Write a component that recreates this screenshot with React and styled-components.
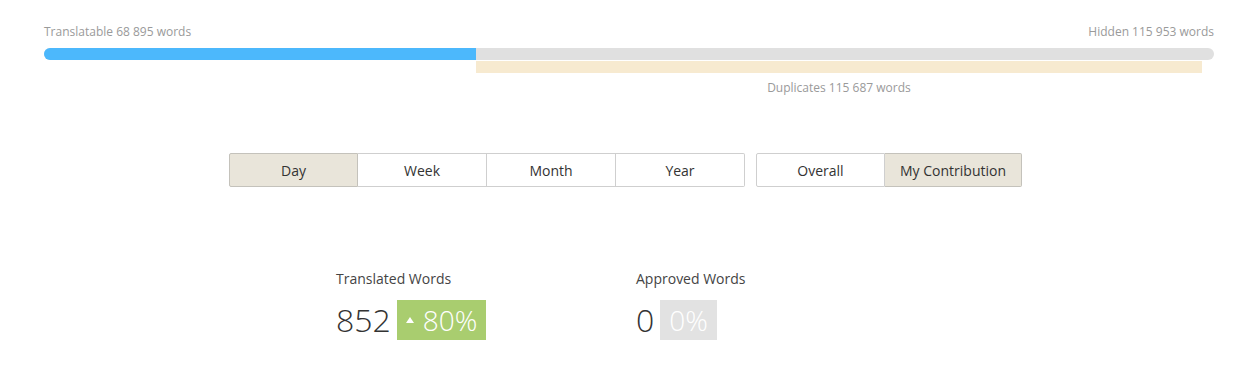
import React from 'react'
import styled, { createGlobalStyle } from 'styled-components'

const GlobalStyle = createGlobalStyle`
    body {
        margin: 0;
        background: #fff;
        font-family: "Open Sans", "Noto Sans", sans-serif;
        color: #333;
    }
`

const Page = styled.div`
    padding: 24px 22px 0 44px;
`

const Labels = styled.div`
    display: flex;
    justify-content: space-between;
    font-size: 12px;
    line-height: 16px;
    color: #9a9a9a;
    margin-bottom: 8px;
`

const Track = styled.div`
    height: 12px;
    background: #e0e0e0;
    border-radius: 6px;
    overflow: hidden;
`

const Fill = styled.div`
    height: 100%;
    background: #4cb8fc;
`

const Duplicates = styled.div`
    margin-top: 1px;
    margin-left: ${p => p.$offset}%;
    width: ${p => p.$width}%;
`

const DupBar = styled.div`
    height: 12px;
    background: #f7ead0;
`

const DupLabel = styled.div`
    text-align: center;
    font-size: 12px;
    line-height: 16px;
    color: #9a9a9a;
    margin-top: 7px;
`

const Toolbar = styled.div`
    display: flex;
    justify-content: center;
    gap: 11px;
    margin-top: 57px;
    padding-right: 7px;
`

const Group = styled.div`
    display: flex;
`

const Tab = styled.div`
    width: ${p => p.$w || 129}px;
    height: 34px;
    box-sizing: border-box;
    display: flex;
    align-items: center;
    justify-content: center;
    font-size: 14px;
    color: #333;
    border: 1px solid ${p => (p.$active ? '#c4c2bb' : '#cfcfcf')};
    border-left: none;
    background: ${p => (p.$active ? '#e9e5da' : '#fff')};
    &:first-child {
        border-left: 1px solid ${p => (p.$active ? '#c4c2bb' : '#cfcfcf')};
        border-radius: 2px 0 0 2px;
    }
    &:last-child {
        border-radius: 0 2px 2px 0;
    }
`

const Stats = styled.div`
    display: flex;
    margin-top: 82px;
    padding-left: 292px;
`

const Stat = styled.div`
    width: 300px;
`

const StatTitle = styled.div`
    font-size: 14px;
    line-height: 20px;
    color: #444;
    margin-bottom: 11px;
`

const StatRow = styled.div`
    display: flex;
    align-items: center;
    gap: 6px;
`

const Value = styled.span`
    font-size: 32px;
    font-weight: 300;
    line-height: 40px;
    color: #333;
`

const Badge = styled.span`
    height: 40px;
    display: flex;
    align-items: center;
    gap: 9px;
    padding: 0 9px;
    background: ${p => p.$bg};
    color: #fff;
    font-size: 28px;
    font-weight: 300;
`

const Arrow = styled.span`
    width: 0;
    height: 0;
    border-left: 4px solid transparent;
    border-right: 4px solid transparent;
    border-bottom: 6px solid #fff;
`

const transPct = 36.92

export default function App() {
    return (
        <Page>
            <GlobalStyle />
            <Labels>
                <span>Translatable 68 895 words</span>
                <span>Hidden 115 953 words</span>
            </Labels>
            <Track>
                <Fill style={{ width: `${transPct}%` }} />
            </Track>
            <Duplicates $offset={transPct} $width={62.05}>
                <DupBar />
                <DupLabel>Duplicates 115 687 words</DupLabel>
            </Duplicates>
            <Toolbar>
                <Group>
                    <Tab $active>Day</Tab>
                    <Tab>Week</Tab>
                    <Tab>Month</Tab>
                    <Tab>Year</Tab>
                </Group>
                <Group>
                    <Tab>Overall</Tab>
                    <Tab $active $w={137}>My Contribution</Tab>
                </Group>
            </Toolbar>
            <Stats>
                <Stat>
                    <StatTitle>Translated Words</StatTitle>
                    <StatRow>
                        <Value>852</Value>
                        <Badge $bg="#a9cd6f"><Arrow />80%</Badge>
                    </StatRow>
                </Stat>
                <Stat>
                    <StatTitle>Approved Words</StatTitle>
                    <StatRow>
                        <Value>0</Value>
                        <Badge $bg="#e2e2e2">0%</Badge>
                    </StatRow>
                </Stat>
            </Stats>
        </Page>
    )
}
